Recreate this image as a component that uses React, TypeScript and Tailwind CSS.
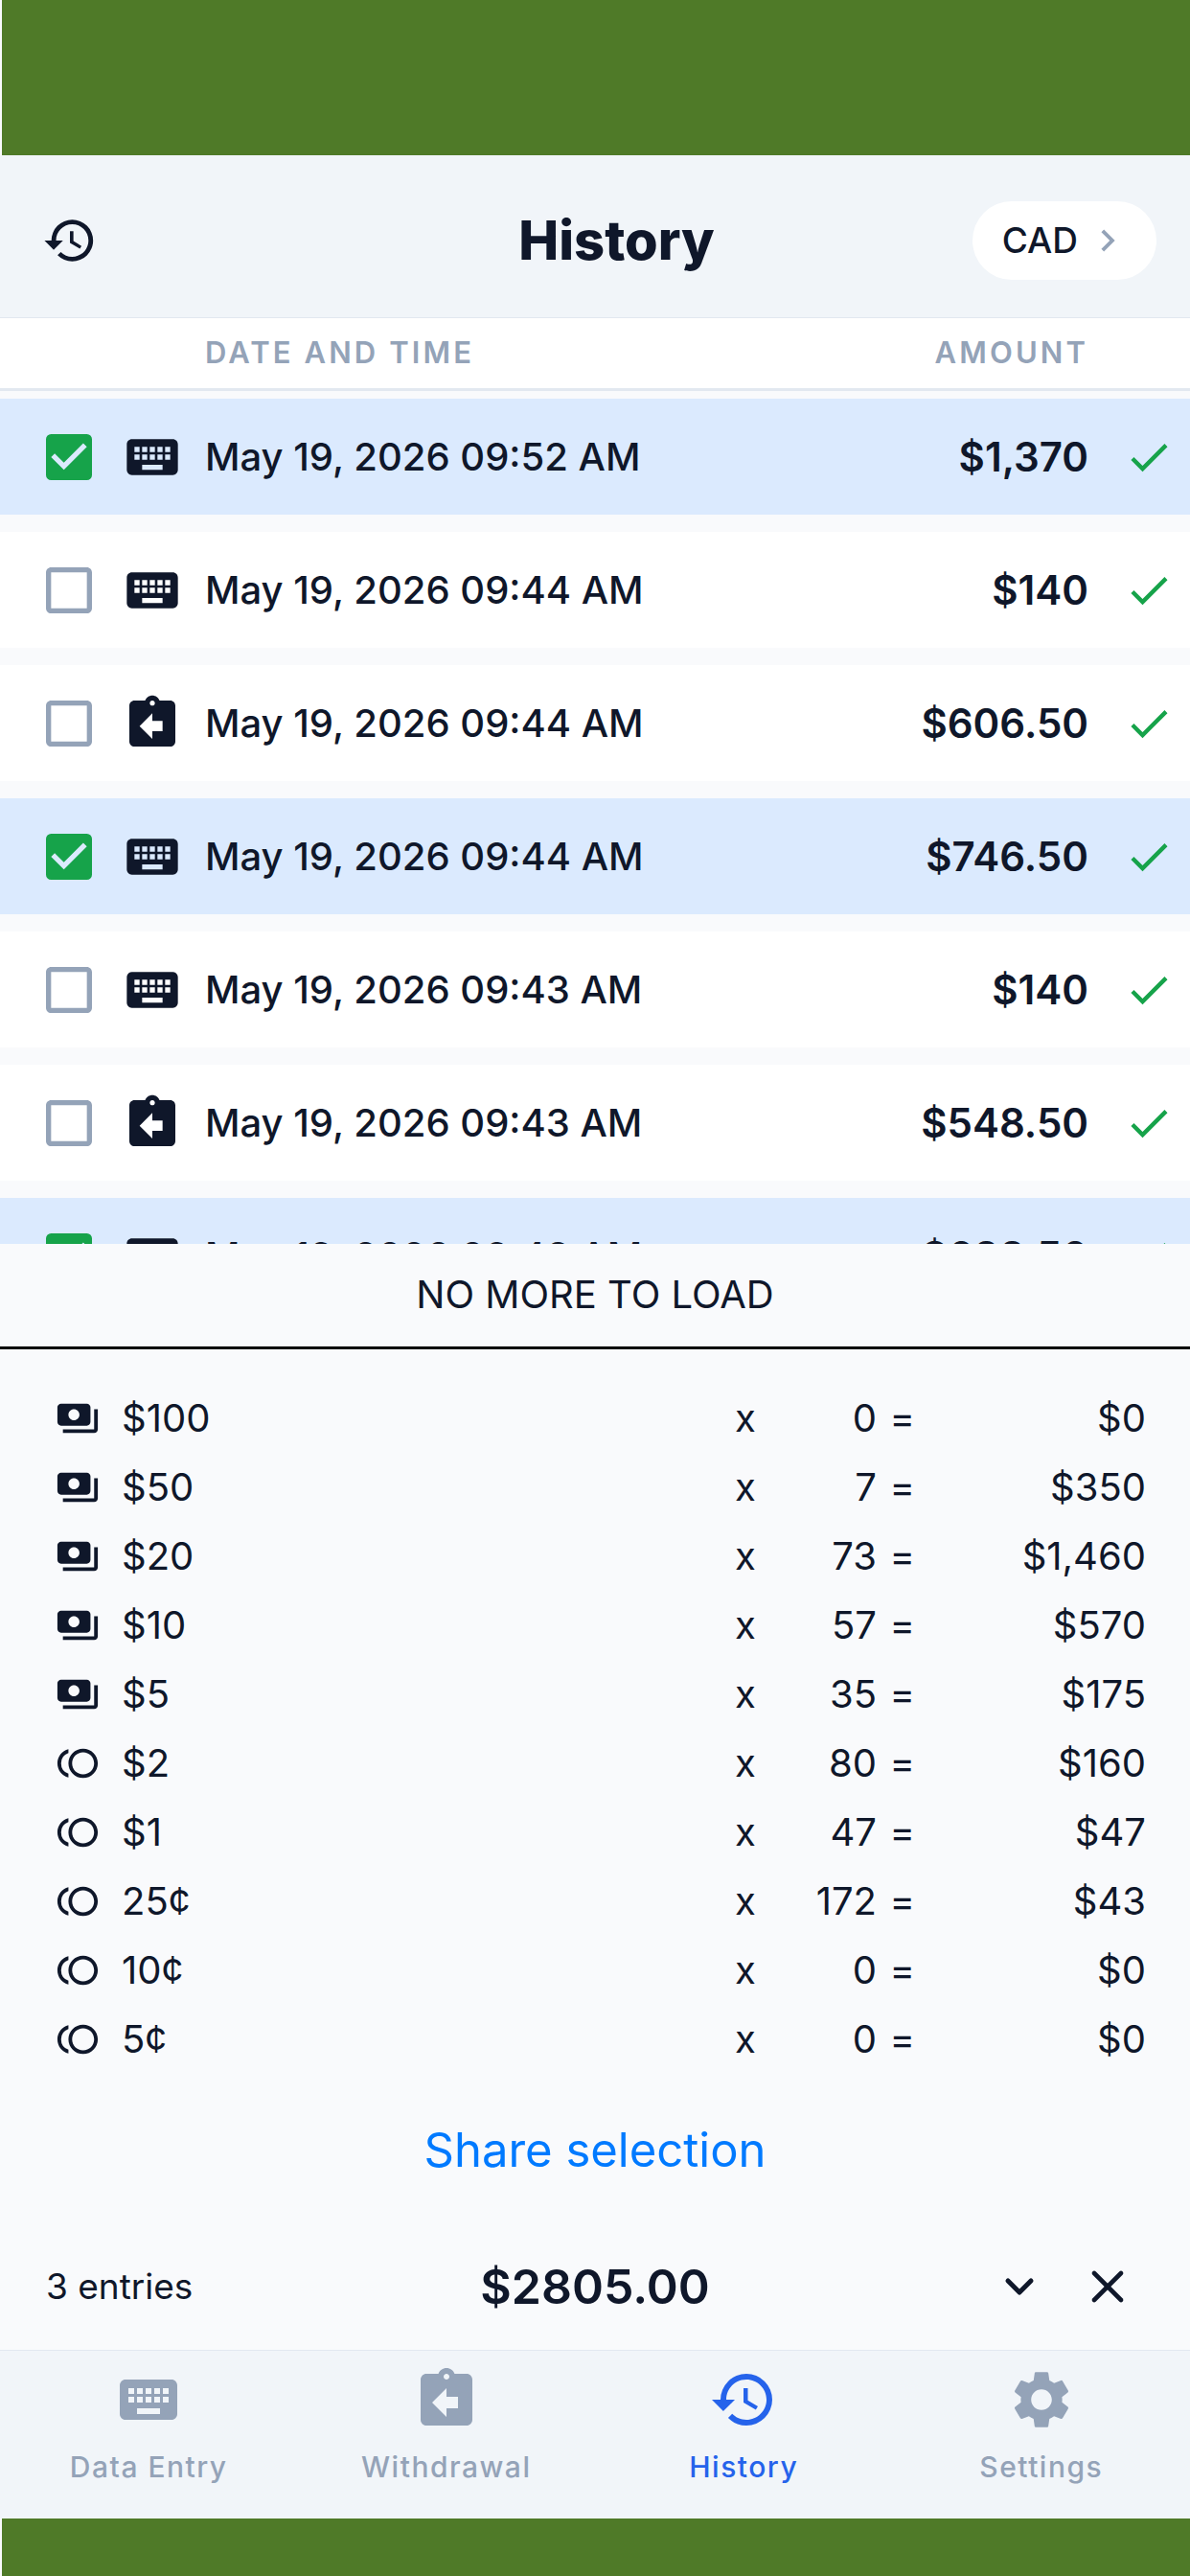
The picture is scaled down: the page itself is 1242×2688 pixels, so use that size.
import { useState } from "react";
import { ChevronDown, X } from "lucide-react";
import type { IconType } from "react-icons";
import {
  MdAssignmentReturn,
  MdCheck,
  MdCheckBox,
  MdCheckBoxOutlineBlank,
  MdChevronRight,
  MdHistory,
  MdKeyboard,
  MdPayments,
  MdSettings,
  MdToll,
} from "react-icons/md";

type Entry = {
  id: number;
  kind: "entry" | "withdrawal";
  date: string;
  amount: string;
};

const entries: Entry[] = [
  { id: 1, kind: "entry", date: "May 19, 2026 09:52 AM", amount: "$1,370" },
  { id: 2, kind: "entry", date: "May 19, 2026 09:44 AM", amount: "$140" },
  { id: 3, kind: "withdrawal", date: "May 19, 2026 09:44 AM", amount: "$606.50" },
  { id: 4, kind: "entry", date: "May 19, 2026 09:44 AM", amount: "$746.50" },
  { id: 5, kind: "entry", date: "May 19, 2026 09:43 AM", amount: "$140" },
  { id: 6, kind: "withdrawal", date: "May 19, 2026 09:43 AM", amount: "$548.50" },
  { id: 7, kind: "entry", date: "May 19, 2026 09:43 AM", amount: "$688.50" },
];

const denominations = [
  { label: "$100", count: 0, total: "$0", coin: false },
  { label: "$50", count: 7, total: "$350", coin: false },
  { label: "$20", count: 73, total: "$1,460", coin: false },
  { label: "$10", count: 57, total: "$570", coin: false },
  { label: "$5", count: 35, total: "$175", coin: false },
  { label: "$2", count: 80, total: "$160", coin: true },
  { label: "$1", count: 47, total: "$47", coin: true },
  { label: "25¢", count: 172, total: "$43", coin: true },
  { label: "10¢", count: 0, total: "$0", coin: true },
  { label: "5¢", count: 0, total: "$0", coin: true },
];

const tabs: { label: string; icon: IconType }[] = [
  { label: "Data Entry", icon: MdKeyboard },
  { label: "Withdrawal", icon: MdAssignmentReturn },
  { label: "History", icon: MdHistory },
  { label: "Settings", icon: MdSettings },
];

function Header() {
  return (
    <header className="grid h-[170px] shrink-0 grid-cols-[284px_1fr_239px] items-center border-b border-slate-200 bg-slate-100 pt-2">
      <button aria-label="Reload history" className="w-fit pl-[44px]">
        <MdHistory size={58} />
      </button>
      <h1 className="text-center text-[56px] leading-[64px] font-extrabold">
        History
      </h1>
      <button className="mr-[35px] ml-auto flex h-[82px] items-center gap-2 rounded-full bg-white pr-7 pl-[31px] text-[37px] font-medium">
        CAD
        <MdChevronRight size={46} className="text-[#94a3b8]" />
      </button>
    </header>
  );
}

type EntryRowProps = {
  entry: Entry;
  selected: boolean;
  onToggle: () => void;
};

function EntryRow({ entry, selected, onToggle }: EntryRowProps) {
  const KindIcon = entry.kind === "entry" ? MdKeyboard : MdAssignmentReturn;
  return (
    <tr
      className={`h-[139px] *:border-b-[18px] *:border-[#f9fafc] ${
        selected ? "bg-blue-100" : "bg-white"
      }`}
    >
      <td className="pl-10">
        <label className="block w-16">
          <input
            type="checkbox"
            className="sr-only"
            aria-label={`Select ${entry.date} ${entry.amount}`}
            checked={selected}
            onChange={onToggle}
          />
          {selected ? (
            <MdCheckBox size={64} className="text-[#16a34a]" />
          ) : (
            <MdCheckBoxOutlineBlank size={64} className="text-[#94a3b8]" />
          )}
        </label>
      </td>
      <td>
        <KindIcon size={64} />
      </td>
      <td className="text-[40px] font-medium">{entry.date}</td>
      <td className="text-right text-[42px] font-semibold">{entry.amount}</td>
      <td className="pl-[37px]">
        <MdCheck size={52} className="text-[#16a34a]" />
      </td>
    </tr>
  );
}

function Breakdown() {
  return (
    <table className="w-full table-fixed text-[40px] leading-[48px]">
      <colgroup>
        <col className="w-[127px]" />
        <col />
        <col className="w-[60px]" />
        <col className="w-[88px]" />
        <col className="w-[40px]" />
        <col className="w-[287px]" />
      </colgroup>
      <tbody>
        {denominations.map((d) => (
          <tr key={d.label} className="h-[72px]">
            <td className="pl-[58px]">
              {d.coin ? <MdToll size={46} /> : <MdPayments size={46} />}
            </td>
            <td>{d.label}</td>
            <td>x</td>
            <td className="text-right">{d.count}</td>
            <td className="text-right">=</td>
            <td className="pr-[46px] text-right">{d.total}</td>
          </tr>
        ))}
      </tbody>
    </table>
  );
}

export default function App() {
  const [selectedIds, setSelectedIds] = useState([1, 4, 7]);
  const [activeTab, setActiveTab] = useState("History");

  const toggle = (id: number) =>
    setSelectedIds((prev) =>
      prev.includes(id) ? prev.filter((i) => i !== id) : [...prev, id]
    );

  return (
    <div className="flex h-screen flex-col bg-[#f9fafc] font-['Inter',sans-serif] text-[#0f172a]">
      <div className="ml-0.5 h-[162px] shrink-0 bg-[#4f7a28]" />
      <Header />

      <main className="min-h-0 flex-1 overflow-hidden">
        <table className="w-full table-fixed border-separate border-spacing-0">
          <colgroup>
            <col className="w-[127px]" />
            <col className="w-[87px]" />
            <col />
            <col className="w-[240px]" />
            <col className="w-[106px]" />
          </colgroup>
          <thead>
            <tr className="h-[76px] bg-white text-[31px] tracking-widest text-[#94a3b8] *:border-b-[3px] *:border-slate-200 *:font-semibold">
              <th />
              <th />
              <th className="text-left">DATE AND TIME</th>
              <th className="text-right">AMOUNT</th>
              <th />
            </tr>
          </thead>
          <tbody className="before:block before:h-2 before:content-['']">
            {entries.map((entry) => (
              <EntryRow
                key={entry.id}
                entry={entry}
                selected={selectedIds.includes(entry.id)}
                onToggle={() => toggle(entry.id)}
              />
            ))}
          </tbody>
        </table>
      </main>

      <section className="shrink-0">
        <p className="h-[110px] border-b-[3px] border-black pt-7 text-center text-[40px] leading-[50px]">
          NO MORE TO LOAD
        </p>
        <div className="pt-9">
          <Breakdown />
        </div>
        <button className="mx-auto mt-12 block text-[49px] leading-[64px] text-[#007aff]">
          Share selection
        </button>
        <div className="mt-[34px] grid h-[142px] grid-cols-[1fr_auto_1fr] items-center px-12 pt-[10px]">
          <span className="text-[37px]">{selectedIds.length} entries</span>
          <strong className="text-[50px] font-semibold">$2805.00</strong>
          <div className="flex items-center justify-end gap-10 pr-[10px]">
            <button aria-label="Collapse details">
              <ChevronDown size={48} strokeWidth={2.5} />
            </button>
            <button aria-label="Clear selection">
              <X size={56} />
            </button>
          </div>
        </div>
      </section>

      <nav className="grid h-[176px] shrink-0 grid-cols-4 border-t border-slate-200 bg-slate-100">
        {tabs.map(({ label, icon: Icon }) => (
          <button
            key={label}
            onClick={() => setActiveTab(label)}
            className={`flex flex-col items-center gap-3.5 pt-[15px] text-[30px] leading-[40px] font-medium tracking-wider ${
              activeTab === label ? "text-[#2563eb]" : "text-[#94a3b8]"
            }`}
          >
            <Icon size={72} />
            {label}
          </button>
        ))}
      </nav>
      <div className="ml-0.5 h-[60px] shrink-0 bg-[#4f7a28]" />
    </div>
  );
}
